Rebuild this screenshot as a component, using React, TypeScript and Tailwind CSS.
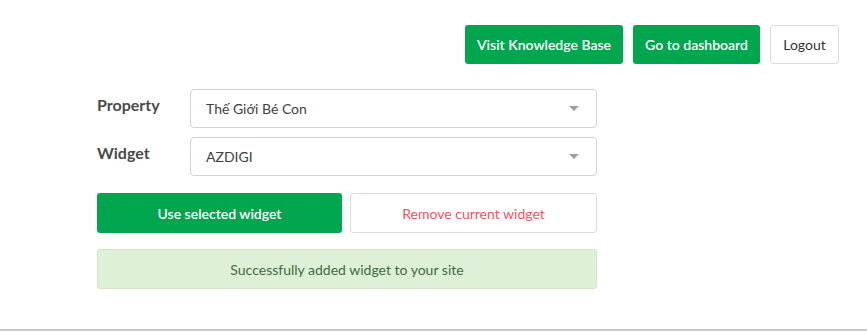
import React from 'react';

const SelectBox = ({ value }: { value: string }) => (
  <div className="flex-1 h-[39px] rounded-[4px] border border-[#d4d4d8] bg-white flex items-center justify-between pl-[15px] pr-[17px]">
    <span className="text-[14px] text-[#3f3f3f]">{value}</span>
    <svg width="10" height="5" viewBox="0 0 10 5">
      <path d="M0 0 L10 0 L5 5 Z" fill="#97a29a" />
    </svg>
  </div>
);

export default function App() {
  return (
    <div className="w-[867px] h-[334px] bg-white font-['Lato','Liberation_Sans',sans-serif] flex flex-col">
      <div className="flex justify-end gap-[10px] pt-[25px] pr-[28px]">
        <button className="h-[39px] w-[158px] rounded-[3px] bg-[#02a64f] text-white text-[14px] font-semibold">
          Visit Knowledge Base
        </button>
        <button className="h-[39px] w-[127px] rounded-[3px] bg-[#02a64f] text-white text-[14px] font-semibold">
          Go to dashboard
        </button>
        <button className="h-[39px] w-[69px] rounded-[3px] bg-white border border-[#dcdce0] text-[#333] text-[14px]">
          Logout
        </button>
      </div>

      <div className="ml-[97px] w-[500px] mt-[25px] flex flex-col">
        <div className="flex items-center">
          <label className="w-[93px] text-[16px] font-bold text-[#4a4a4a] -mt-[7px]">Property</label>
          <SelectBox value="Thế Giới Bé Con" />
        </div>
        <div className="flex items-center mt-[9px]">
          <label className="w-[93px] text-[16px] font-bold text-[#4a4a4a] -mt-[7px]">Widget</label>
          <SelectBox value="AZDIGI" />
        </div>

        <div className="flex gap-[8px] mt-[17px]">
          <button className="flex-1 h-[40px] rounded-[3px] bg-[#02a64f] text-white text-[14px] font-semibold">
            Use selected widget
          </button>
          <button className="flex-1 h-[40px] rounded-[3px] bg-white border border-[#dcdce0] text-[#f2545f] text-[14px]">
            Remove current widget
          </button>
        </div>

        <div className="mt-[16px] h-[40px] rounded-[3px] bg-[#dff0d8] border border-[#d2e6c4] flex items-center justify-center text-[14px] text-[#3f6b3c]">
          Successfully added widget to your site
        </div>
      </div>

      <div className="mt-auto mb-[3px] h-[2px] bg-[#cacaca]" />
    </div>
  );
}
